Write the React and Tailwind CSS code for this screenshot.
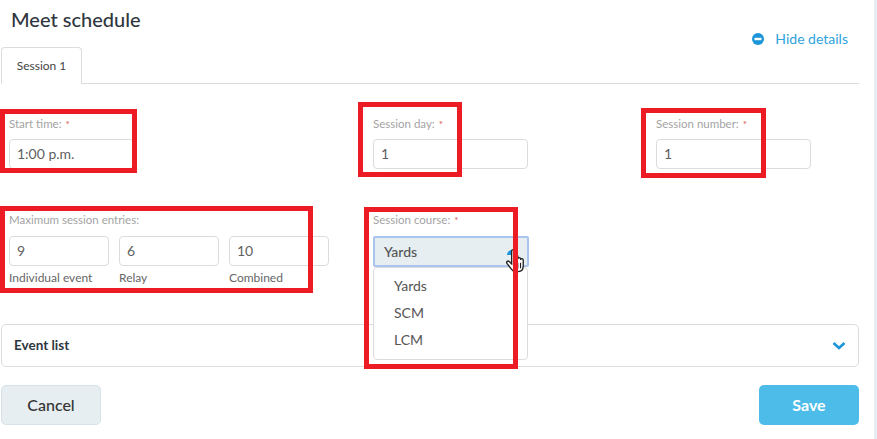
const inputClass =
  'h-[30px] border border-[#dcdcdc] rounded-[4px] pl-[7px] pb-[1px] flex items-center text-[14px] text-[#5f5f5f]';
const labelClass = 'pt-[1px] text-[11.500px] leading-[14px] text-[#a3a3a3]';

function Req() {
  return <span className="ml-1 text-[#d9534f] text-[10px] align-top">*</span>;
}

function Field({ label, width, value }) {
  return (
    <div className={width}>
      <div className={labelClass + ' mb-[8px]'}>
        {label}
        <Req />
      </div>
      <div className={inputClass}>{value}</div>
    </div>
  );
}

function Small({ value, caption }) {
  return (
    <div className="w-[100px]">
      <div className={inputClass}>{value}</div>
      <div className="mt-[5px] text-[12px] leading-[14px] text-[#666]">{caption}</div>
    </div>
  );
}

function RedBox({ className }) {
  return <div className={'absolute border-[5px] border-[#ed1c24] pointer-events-none ' + className} />;
}

function Hand() {
  return (
    <svg width="20" height="26" viewBox="0 0 18 23" className="absolute left-[505px] top-[247px]">
      <path
        d="M6 15V3.500a1.400 1.400 0 0 1 2.800 0V10l.2-1.600a1.300 1.300 0 0 1 2.600.2V10.500a1.200 1.200 0 0 1 2.400 0v1a1.200 1.200 0 0 1 2.400 0V17c0 3-1.500 5-4.500 5H9.500C7.500 22 6.500 21 5.500 19.500L1.800 14.500c-1-1.500.8-2.700 2-1.700Z"
        fill="#fff"
        stroke="#222"
        strokeWidth="1.200"
      />
      <path d="M9 14v5M11.500 14v5M14 14v5" stroke="#222" strokeWidth="1" />
    </svg>
  );
}

export default function App() {
  return (
    <div className="relative w-[877px] h-[439px] bg-white overflow-hidden font-['Lato',sans-serif]">
      <div className="flex h-full">
        <div className="w-[874px] pl-[1px] pr-[15px]">
          <div className="flex items-start justify-between h-[47px]">
            <h1 className="pl-[10px] pt-[6px] text-[20px] leading-[26px] font-medium text-[#2f3640]">Meet schedule</h1>
            <div className="flex items-center mt-[30px] mr-[11px] text-[14px] leading-[18px] text-[#2ea3dc]">
              <svg width="12" height="12" viewBox="0 0 12 12" className="mr-[11px]">
                <circle cx="6" cy="6" r="6" fill="#1b95d8" />
                <rect x="2.500" y="4.800" width="7" height="2.400" fill="#fff" />
              </svg>
              Hide details
            </div>
          </div>

          <div className="border-b border-[#dcdcdc] h-[37px]">
            <div className="w-[81px] h-[37px] bg-white border border-b-0 border-[#dcdcdc] rounded-t-[4px] flex items-center justify-center text-[12px] text-[#444]">
              Session 1
            </div>
          </div>

          <div className="flex mt-[32px] h-[55px]">
            <div className="w-[372px] pl-[8px]">
              <Field label="Start time:" width="w-[125px]" value="1:00 p.m." />
            </div>
            <div className="w-[283px]">
              <Field label="Session day:" width="w-[155px]" value="1" />
            </div>
            <Field label="Session number:" width="w-[155px]" value="1" />
          </div>

          <div className="flex mt-[41px] h-[112px]">
            <div className="w-[372px] pl-[8px]">
              <div className={labelClass + ' mb-[9px]'}>Maximum session entries:</div>
              <div className="flex gap-[10px]">
                <Small value="9" caption="Individual event" />
                <Small value="6" caption="Relay" />
                <Small value="10" caption="Combined" />
              </div>
            </div>
            <div className="w-[156px]">
              <div className={labelClass + ' mb-[9px]'}>
                Session course:
                <Req />
              </div>
              <div className="relative h-[31px] border-2 border-[#a9c4ee] rounded-[2px] bg-[#e6eef2] pl-[9px] pb-[1px] flex items-center text-[14px] font-medium text-[#555]">
                Yards
                <span className="absolute right-[10px] top-[12px] w-[10px] h-[5px] bg-[#1b95d8] rounded-t-full" />
              </div>
            </div>
          </div>

          <div className="h-[43px] border border-[#dcdcdc] rounded-[5px] flex items-center justify-between pl-[12px] pr-[12px] text-[13.500px] font-bold text-[#2f3640]">
            Event list
            <svg width="14" height="10" viewBox="0 0 14 10">
              <path d="M1.500 2l5.500 5 5.500-5" fill="none" stroke="#1b95d8" strokeWidth="2.600" />
            </svg>
          </div>

          <div className="flex justify-between mt-[18px]">
            <div className="w-[100px] h-[40px] bg-[#e6eef2] border border-[#d5e2e8] rounded-[5px] flex items-center justify-center text-[16px] font-medium text-[#333]">
              Cancel
            </div>
            <div className="w-[100px] h-[40px] bg-[#4dbce9] rounded-[5px] flex items-center justify-center text-[16px] font-bold text-white">
              Save
            </div>
          </div>
        </div>
        <div className="flex-1 bg-[#e6eef2]" />
      </div>

      {/* open dropdown of the session course select */}
      <div className="absolute left-[373px] top-[267px] w-[155px] h-[93px] bg-white border border-[#dcdcdc] rounded-[4px] pl-[20px] pt-[4px] text-[14px] leading-[27px] text-[#555]">
        <div>Yards</div>
        <div>SCM</div>
        <div>LCM</div>
      </div>

      <Hand />

      {/* red annotation boxes drawn over the screenshot */}
      <RedBox className="left-0 top-[109px] w-[137px] h-[64px]" />
      <RedBox className="left-[358px] top-[102px] w-[104px] h-[75px]" />
      <RedBox className="left-[641px] top-[108px] w-[125px] h-[70px]" />
      <RedBox className="left-0 top-[206px] w-[313px] h-[87px]" />
      <RedBox className="left-[364px] top-[207px] w-[154px] h-[162px]" />
    </div>
  );
}
